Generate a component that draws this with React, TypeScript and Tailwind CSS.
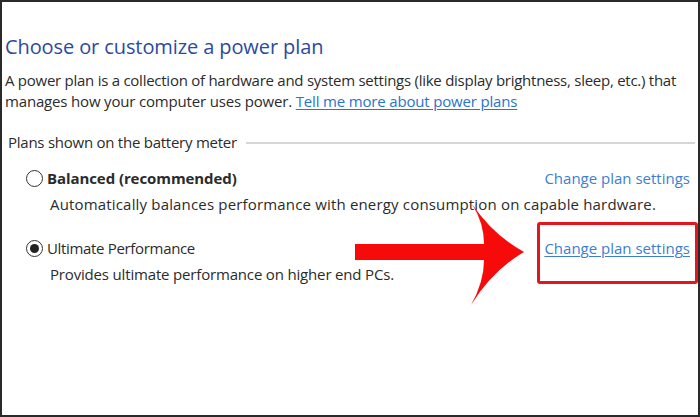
import React from "react";

function Radio({ checked }: { checked?: boolean }) {
  return (
    <span className="flex h-[17px] w-[17px] shrink-0 items-center justify-center rounded-full border border-[#333] bg-white">
      {checked ? <span className="h-[9px] w-[9px] rounded-full bg-[#222]" /> : null}
    </span>
  );
}

export default function App() {
  return (
    <div
      className="relative h-[417px] w-[700px] overflow-hidden border-2 border-[#2a2a2a] bg-white text-[#2b2b2b]"
      style={{ fontFamily: '"Open Sans", "Noto Sans", sans-serif' }}
    >
      <div className="px-[3px] pt-[31px]">
        <h1 className="text-[20px] leading-[28px] tracking-[-0.1px] text-[#2c4a9e]">
          Choose or customize a power plan
        </h1>
        <p className="mt-[9px] whitespace-nowrap text-[15px] leading-[21px]">
          <span className="tracking-[-0.26px]">
            A power plan is a collection of hardware and system settings (like display brightness, sleep, etc.) that
          </span>
          <br />
          <span className="tracking-[-0.17px]">
            manages how your computer uses power.{" "}
            <span className="text-[#2a74c9] underline underline-offset-2">Tell me more about power plans</span>
          </span>
        </p>
        <div className="mt-[20px] flex items-center gap-[9px] pl-[3px]">
          <span className="text-[15px] leading-[21px] tracking-[-0.25px]">Plans shown on the battery meter</span>
          <span className="h-[2px] flex-1 bg-[#d6d6d6]" />
        </div>
        <div className="mt-[14px] pl-[21px] pr-[5px]">
          <div className="flex items-center justify-between">
            <div className="flex items-center gap-[4px]">
              <Radio />
              <span className="text-[15px] font-bold leading-[22px] tracking-[-0.08px]">Balanced (recommended)</span>
            </div>
            <span className="text-[15px] leading-[22px] text-[#3b7fd0]">Change plan settings</span>
          </div>
          <p className="mt-[4px] pl-[24px] whitespace-nowrap text-[15px] leading-[22px] tracking-[0.17px]">
            Automatically balances performance with energy consumption on capable hardware.
          </p>
          <div className="mt-[22px] flex items-center justify-between">
            <div className="flex items-center gap-[4px]">
              <Radio checked />
              <span className="text-[15px] leading-[22px] tracking-[-0.33px]">Ultimate Performance</span>
            </div>
            <span className="text-[15px] leading-[22px] text-[#3b7fd0] underline underline-offset-2">
              Change plan settings
            </span>
          </div>
          <p className="mt-[4px] pl-[24px] text-[15px] leading-[22px] tracking-[-0.17px]">
            Provides ultimate performance on higher end PCs.
          </p>
        </div>
      </div>

      <div className="absolute left-[535px] top-[220px] h-[62px] w-[161px] rounded-[3px] border-[3px] border-[#e3161d]" />

      <svg className="absolute left-0 top-0" width="700" height="417" viewBox="0 0 700 417">
        <path
          d="M353 242 L482 242 Q482 221 470 202 Q491 233 522 250 Q491 268 469 303 Q482 280 482 258 L353 258 Z"
          fill="#f70a0a"
        />
      </svg>
    </div>
  );
}
